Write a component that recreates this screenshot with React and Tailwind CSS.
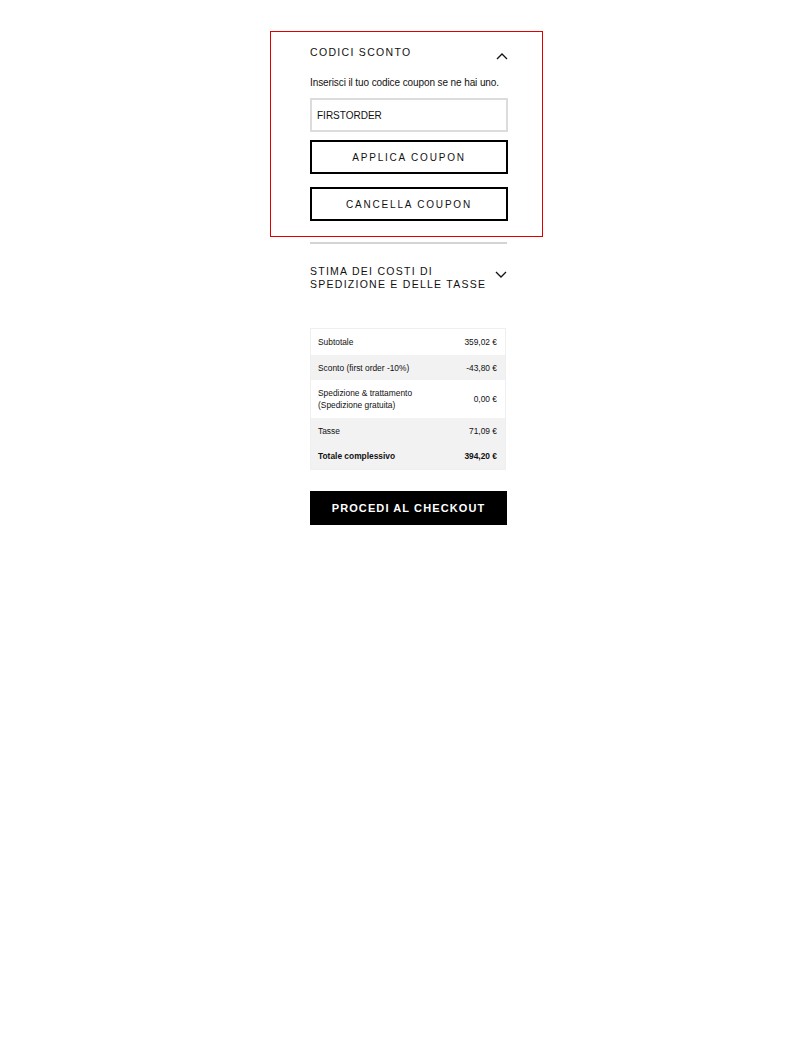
import React from 'react';

const ChevronUp = () => (
  <svg width="12" height="8" viewBox="0 0 12 8" fill="none" className="mt-[6px]">
    <path d="M1 7L6 2L11 7" stroke="#111" strokeWidth="1.3" />
  </svg>
);

const ChevronDown = () => (
  <svg width="12" height="8" viewBox="0 0 12 8" fill="none" className="mt-[6px]">
    <path d="M1 1L6 6L11 1" stroke="#111" strokeWidth="1.3" />
  </svg>
);

const rows = [
  { label: 'Subtotale', value: '359,02 €', bg: 'bg-white', h: 'h-[26px]' },
  { label: 'Sconto (first order -10%)', value: '-43,80 €', bg: 'bg-[#f2f2f2]', h: 'h-[25px]' },
  { label: 'Spedizione & trattamento', sub: '(Spedizione gratuita)', value: '0,00 €', bg: 'bg-white', h: 'h-[38px]' },
  { label: 'Tasse', value: '71,09 €', bg: 'bg-[#f2f2f2]', h: 'h-[25px]' },
  { label: 'Totale complessivo', value: '394,20 €', bg: 'bg-[#f2f2f2]', h: 'h-[26px]', bold: true },
];

export default function App() {
  return (
    <div className="min-h-screen bg-white text-[#111] font-['Liberation_Sans',Arial,sans-serif]">
      <div className="pt-[31px]">
        {/* Coupon panel */}
        <div className="ml-[270px] w-[273px] border border-[#e00000] pl-[39px] pr-[34px] pt-[14px] pb-[15px]">
          <div className="flex items-start justify-between">
            <h2 className="text-[10.5px] leading-[13px] tracking-[0.125em] uppercase whitespace-nowrap">Codici sconto</h2>
            <ChevronUp />
          </div>
          <p className="mt-[17px] text-[10px] leading-[12px] tracking-[-0.01em]">Inserisci il tuo codice coupon se ne hai uno.</p>
          <div className="mt-[9px] h-[34px] border-2 border-[#dcdcdc] flex items-center px-[5px] text-[10px]">
            FIRSTORDER
          </div>
          <button className="mt-[8px] w-full h-[34px] border-2 border-black text-[10px] tracking-[0.18em] uppercase">
            Applica coupon
          </button>
          <button className="mt-[13px] w-full h-[34px] border-2 border-black text-[10px] tracking-[0.18em] uppercase">
            Cancella coupon
          </button>
        </div>

        <div className="ml-[310px] w-[197px]">
          <div className="mt-[5px] h-[2px] bg-[#d4d4d4]" />

          {/* Shipping estimate */}
          <div className="mt-[21px] flex items-start justify-between">
            <h2 className="text-[10.5px] leading-[13px] tracking-[0.12em] uppercase whitespace-nowrap">
              Stima dei costi di
              <br />
              spedizione e delle tasse
            </h2>
            <ChevronDown />
          </div>

          {/* Totals */}
          <div className="mt-[37px] w-[196px] border border-[#efefef]">
            {rows.map((r) => (
              <div key={r.label} className={`${r.bg} ${r.h} flex items-center justify-between pl-[7px] pr-[8px] text-[8.4px] leading-[12px] ${r.bold ? 'font-bold' : ''}`}>
                <div>
                  <div>{r.label}</div>
                  {r.sub && <div>{r.sub}</div>}
                </div>
                <div>{r.value}</div>
              </div>
            ))}
          </div>

          <button className="mt-[21px] w-full h-[34px] bg-black text-white text-[11px] font-bold tracking-[0.1em] uppercase">
            Procedi al checkout
          </button>
        </div>
      </div>
    </div>
  );
}
